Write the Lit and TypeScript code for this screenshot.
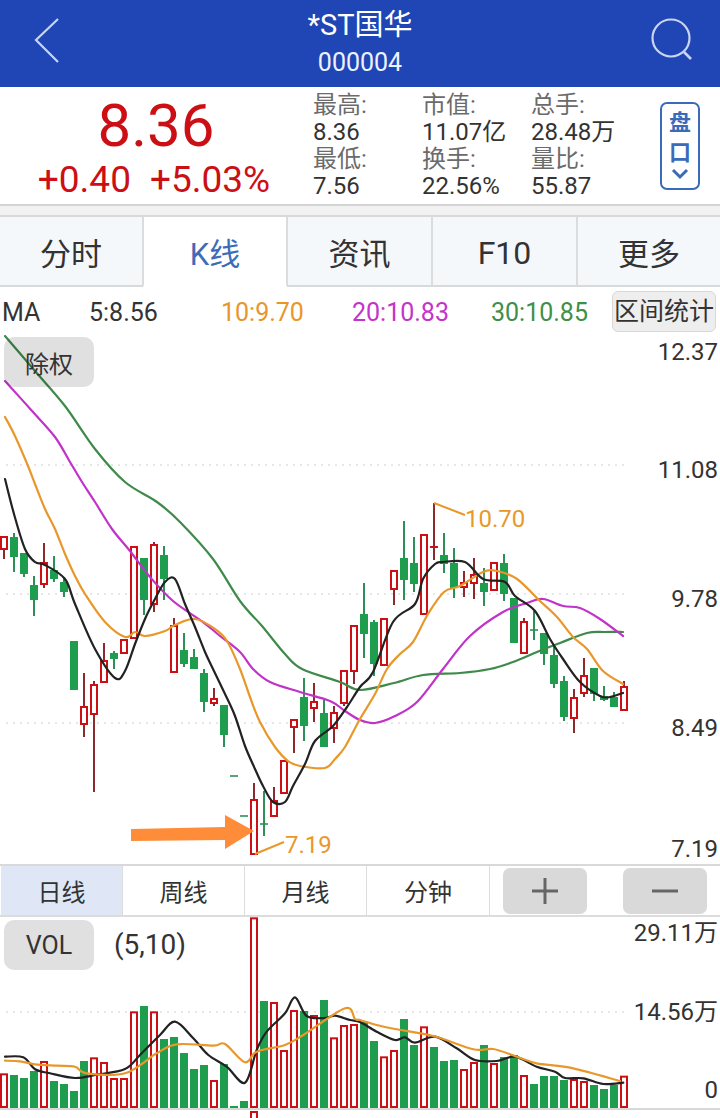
import { LitElement, html, css, svg } from "lit";
import { customElement } from "lit/decorators.js";

type C = [string, number, number, number, number];
const candles: C[] = [
  ["r",538,538,550,560],["g",534,538,558,573],["g",554,554,575,578],["g",577,586,601,617],["r",544,564,585,589],
  ["g",557,571,580,583],["g",578,583,593,598],["g",642,642,691,691],["r",674,708,725,738],["r",682,686,715,793],
  ["r",644,662,683,683],["g",652,654,660,670],["r",641,641,654,654],["r",548,548,639,639],["g",559,559,601,616],
  ["r",543,546,605,613],["g",547,556,580,601],["r",619,627,673,673],["g",634,651,665,668],["g",650,658,670,670],
  ["g",670,674,703,713],["r",689,700,704,707],["g",706,706,736,748],["g",777,777,777,777],["g",817,817,817,817],
  ["r",784,801,855,855],["g",792,825,825,837],["r",788,802,817,817],["r",762,762,794,794],["r",721,721,728,754],
  ["g",679,698,727,742],["r",684,703,709,723],["g",701,714,748,748],["r",707,714,729,744],["r",672,672,704,707],
  ["r",627,627,672,685],["g",584,615,635,659],["g",621,623,665,677],["r",620,620,666,666],["r",572,572,590,606],
  ["g",522,559,581,601],["g",538,564,585,593],["r",536,536,615,615],["r",504,547,549,561],["g",534,556,565,574],
  ["g",549,564,589,599],["r",572,584,588,598],["r",559,576,584,600],["g",569,584,593,607],["r",564,564,591,591],
  ["g",555,564,595,602],["g",599,599,644,644],["r",619,623,654,654],["g",612,631,631,641],["g",634,634,655,666],
  ["g",647,656,685,689],["g",677,682,718,722],["r",690,699,719,734],["r",659,677,694,698],["g",669,669,695,702],
  ["g",687,697,701,702],["g",693,698,708,708],["r",682,688,711,711],
];

const ma5 = "5,480 14,515 25,550 35,563 45,566 65,580 75,605 95,650 115,679 125,672 135,645 145,620 155,600 165,583 175,580 185,605 195,628 205,653 213,670 225,695 235,717 245,747 255,770 263,787 273,803 285,803 293,787 305,765 315,742 333,727 347,708 360,688 373,673 393,623 415,605 423,580 435,565 443,563 465,563 483,580 505,583 515,597 535,612 550,640 563,660 580,683 600,697 610,698 623,694";
const ma10 = "5,418 15,437 28,467 35,485 45,510 55,530 65,555 75,577 85,595 105,623 125,638 135,633 145,637 165,632 175,626 195,620 215,630 227,642 240,670 250,698 260,723 275,748 288,762 300,767 325,769 335,760 345,748 360,720 375,695 387,670 400,655 413,643 428,615 444,593 460,587 483,573 497,572 517,580 540,602 557,618 573,638 587,650 603,672 623,685";
const ma20 = "5,382 33,413 55,438 70,463 82,483 95,503 112,530 130,552 150,578 173,602 203,623 220,637 240,653 253,670 270,683 300,693 330,702 345,712 360,721 375,724 395,717 417,703 443,670 470,637 503,613 527,604 543,600 563,607 580,609 600,620 623,637";
const ma30 = "5,337 35,372 65,407 95,450 125,483 157,503 180,523 213,560 240,602 262,627 285,655 302,670 340,683 360,691 394,684 423,676 460,674 490,670 513,663 537,653 560,644 587,634 605,633 623,633";

const volTops = [643,645,654,633,606,663,672,693,603,595,609,657,657,457,438,457,537,531,579,627,615,663,612,738,723,175,423,429,573,453,453,468,420,535,498,495,
  485,543,592,573,477,555,502,561,603,600,630,609,555,612,591,585,648,672,648,648,660,660,666,675,687,675,650];
const volRed = new Set([0,4,9,10,11,12,13,15,21,25,27,28,29,31,33,34,35,38,39,42,46,47,49,52,57,58,62]);

const conv = (pts: number[][], ox: number) =>
  pts.map(([x, y]) => `${(ox + x / 3).toFixed(1)},${(860 + y / 3).toFixed(1)}`).join(" ");
const vma5 = conv([[15,590],[70,592],[105,628],[150,640],[225,654],[290,644],[375,627],[420,585],[480,525],[525,485],[580,535],[625,585],[680,620],[735,668],[770,570],[800,515],[855,460],[885,412],[920,468],[975,474],[1005,467],[1050,480],[1080,486]],0)
  + " " + conv([[50,515],[105,540],[135,532],[165,548],[225,530],[290,565],[345,600],[410,603],[465,590],[530,620],[585,635],[615,654],[670,655],[730,672],[790,668]],360);
const vma10 = conv([[15,602],[60,604],[105,613],[170,617],[225,620],[260,640],[375,640],[470,580],[530,553],[640,557],[675,552],[735,607],[770,575],[855,555],[910,525],[1035,445],[1065,477],[1080,480]],0)
  + " " + conv([[50,495],[105,507],[220,528],[340,568],[400,567],[470,590],[530,610],[640,625],[780,663]],360);

const smooth = (s: string) => {
  const p = s.split(" ").map((q) => q.split(",").map(Number));
  let d = `M${p[0][0]} ${p[0][1]}`;
  for (let i = 0; i < p.length - 1; i++) {
    const a = p[Math.max(0, i - 1)], b = p[i], c = p[i + 1], e = p[Math.min(p.length - 1, i + 2)];
    const c1x = b[0] + (c[0] - a[0]) / 6, c1y = b[1] + (c[1] - a[1]) / 6;
    const c2x = c[0] - (e[0] - b[0]) / 6, c2y = c[1] - (e[1] - b[1]) / 6;
    d += `C${c1x.toFixed(1)} ${c1y.toFixed(1)} ${c2x.toFixed(1)} ${c2y.toFixed(1)} ${c[0]} ${c[1]}`;
  }
  return d;
};

const RED = "#cc0f14", WICK = "#8c2b2e", GREEN = "#1f9d4f", GWICK = "#2f8f58";

@customElement("app-root")
export class AppRoot extends LitElement {
  static styles = css`
    :host { display: block; width: 720px; height: 1118px; overflow: hidden; background: #fff; color: #333;
      font-family: Roboto, "Noto Sans CJK SC", sans-serif; }
    .header { height: 87px; background: #1f46b4; position: relative; display: flex; flex-direction: column; align-items: center; color: #fff; }
    .title { font-size: 29px; line-height: 32px; margin-top: 9px; }
    .code { font-size: 25px; line-height: 28px; margin-top: 8px; color: #eef2ff; }
    .hicon { position: absolute; top: 0; left: 0; }
    .quote { height: 117px; display: flex; background: #fff; border-bottom: 2px solid #d4d4d4; box-sizing: content-box; }
    .price { width: 313px; display: flex; flex-direction: column; align-items: center; color: #cc0f14; }
    .last { font-size: 60px; line-height: 66px; margin-top: 6px; margin-right: 1px; }
    .chg { font-size: 37px; line-height: 40px; margin-top: 1px; display: flex; gap: 19px; margin-right: 5px; }
    .stats { display: grid; grid-template-columns: 109px 109px 109px; grid-auto-rows: 27px; padding-top: 5px; font-size: 24px; line-height: 27px; }
    .l { color: #6b6b6b; }
    .v { color: #333; }
    .pan { width: 36px; height: 80px; margin: 15px 0 0 20px; border: 2px solid #3a6bb8; border-radius: 7px; color: #3a6bb8;
      display: flex; flex-direction: column; align-items: center; font-size: 22px; font-weight: 700; line-height: 30px; padding-top: 4px; }
    .gap { height: 9px; background: #f2f2f2; border-bottom: 2px solid #d9d9d9; }
    .tabs { display: grid; grid-template-columns: 143px 144px 145px 145px 143px; height: 70px; }
    .tab { box-sizing: border-box; display: flex; align-items: center; justify-content: center; font-size: 31px; color: #333; background: #f5f8fb;
      border-right: 1px solid #dcdcdc; border-left: 1px solid #dcdcdc; border-bottom: 2px solid #d9d9d9; }
    .tab:first-child { border-left: 0; }
    .tab:last-child { border-right: 0; }
    .tab.on { background: #fff; color: #3c6cb8; border-bottom-color: #fff; }
    .tab.latin { padding-top: 4px; font-size: 32px; }
    .maRow { height: 48px; position: relative; font-size: 25px; line-height: 52px; display: grid; grid-template-columns: 87px 132px 131px 139px 1fr; padding-left: 2px; box-sizing: border-box; }
    .range { position: absolute; right: 4px; top: 4px; width: 104px; height: 41px; box-sizing: border-box; background: #eee; border: 1px solid #d8d8d8; border-radius: 6px;
      font-size: 25px; line-height: 40px; text-align: center; white-space: nowrap; }
    .chart { position: relative; height: 529px; }
    .chart svg { display: block; }
    .pill { position: absolute; left: 4px; width: 90px; height: 50px; background: rgba(0, 0, 0, 0.12); border-radius: 10px; display: flex; align-items: center; justify-content: center; font-size: 24px; color: #333; }
    .pill.fq { top: 2px; }
    .pill.vol { top: 3px; font-size: 25px; padding-top: 1px; box-sizing: border-box; }
    .periods { height: 53px; box-sizing: border-box; border-top: 2px solid #d9d9d9; border-bottom: 2px solid #dcdcdc; display: flex; font-size: 24px; }
    .p { width: 122px; box-sizing: border-box; display: flex; align-items: center; justify-content: center; border-right: 1px solid #dcdcdc; }
    .p.on { background: #dfe7f6; margin-left: 1px; }
    .p.wide { width: 123px; }
    .step { width: 84px; height: 46px; margin-top: 2px; background: #d9d9d9; border-radius: 7px; display: flex; align-items: center; justify-content: center; }
    .step.a { margin-left: 13px; }
    .step.b { margin-left: 36px; }
    .volbox { position: relative; height: 191px; }
    .volbox svg { display: block; }
    .params { position: absolute; left: 114px; top: 12px; font-size: 28px; line-height: 32px; }
    .sep { height: 2px; background: #d9d9d9; }
    .foot { position: relative; height: 8px; overflow: hidden; }
    .footred { position: absolute; left: 250px; top: 1px; width: 8px; height: 8px; box-sizing: border-box; border: 2px solid #cc0f14; border-bottom: 0; }
    .foottext { position: absolute; right: 2px; top: 4px; font-size: 24px; line-height: 28px; }
    text { font-family: Roboto, "Noto Sans CJK SC", sans-serif; }
  `;

  private candle(c: C, i: number) {
    const x = 4 + i * 10;
    const [k, hi, top, bot, lo] = c;
    const red = k === "r";
    const wick = red ? WICK : GWICK;
    const w = svg`<line x1=${x} x2=${x} y1=${hi} y2=${lo} stroke=${wick} stroke-width="2"></line>`;
    if (top === bot) return svg`${w}<line x1=${x - 4} x2=${x + 4} y1=${top} y2=${top} stroke=${GWICK} stroke-width="1.6"></line>`;
    if (bot - top < 4) return svg`${w}<rect x=${x - 4} y=${top} width="8" height=${bot - top} fill=${RED}></rect>`;
    return red
      ? svg`${w}<rect x=${x - 3} y=${top} width="6" height=${bot - top} fill="#fff" stroke=${RED} stroke-width="2"></rect>`
      : svg`${w}<rect x=${x - 4} y=${top} width="8" height=${bot - top} fill=${GREEN}></rect>`;
  }

  private dots(y: number) {
    return svg`<line x1="6" x2="628" y1=${y} y2=${y} stroke="#cfcfcf" stroke-width="1" stroke-dasharray="2 5"></line>`;
  }

  private line(points: string, color: string) {
    return svg`<path d=${smooth(points)} fill="none" stroke=${color} stroke-width="2.2" stroke-linejoin="round" stroke-linecap="round"></path>`;
  }

  private label(y: number, t: string) {
    return svg`<text x="718" y=${y} text-anchor="end" font-size="24" fill="#333">${t}</text>`;
  }

  render() {
    return html`
      <div class="header">
        <svg class="hicon" width="720" height="87" fill="none" stroke="#c9d5f2" stroke-width="2.2">
          <path d="M58 19 36 40 58 62"></path>
          <circle cx="671" cy="38" r="18.5"></circle>
          <path d="M684 52 691 59" stroke-width="2.6"></path>
        </svg>
        <div class="title">*ST国华</div>
        <div class="code">000004</div>
      </div>
      <div class="quote">
        <div class="price">
          <div class="last">8.36</div>
          <div class="chg"><span>+0.40</span><span>+5.03%</span></div>
        </div>
        <div class="stats">
          <div class="l">最高:</div><div class="l">市值:</div><div class="l">总手:</div>
          <div class="v">8.36</div><div class="v">11.07亿</div><div class="v">28.48万</div>
          <div class="l">最低:</div><div class="l">换手:</div><div class="l">量比:</div>
          <div class="v">7.56</div><div class="v">22.56%</div><div class="v">55.87</div>
        </div>
        <div class="pan">
          <span>盘</span><span>口</span>
          <svg width="20" height="12" fill="none" stroke="#3a6bb8" stroke-width="3"><path d="M3 2 10 9 17 2"></path></svg>
        </div>
      </div>
      <div class="gap"></div>
      <div class="tabs">
        <div class="tab">分时</div>
        <div class="tab on">K线</div>
        <div class="tab">资讯</div>
        <div class="tab latin">F10</div>
        <div class="tab">更多</div>
      </div>
      <div class="maRow">
        <span>MA</span>
        <span>5:8.56</span>
        <span style="color:#e8962a">10:9.70</span>
        <span style="color:#c433cc">20:10.83</span>
        <span style="color:#3f8f47">30:10.85</span>
        <div class="range">区间统计</div>
      </div>
      <div class="chart">
        <svg width="720" height="529" viewBox="0 336 720 529">
          ${[466, 595, 724].map((y) => this.dots(y))}
          ${candles.map((c, i) => this.candle(c, i))}
          ${this.line(ma30, "#3f8a4a")}
          ${this.line(ma20, "#c032c8")}
          ${this.line(ma10, "#e8982b")}
          ${this.line(ma5, "#222")}
          ${this.label(361, "12.37")}
          ${this.label(479, "11.08")}
          ${this.label(608, "9.78")}
          ${this.label(737, "8.49")}
          ${this.label(858, "7.19")}
          <path d="M434 504 465 516" stroke="#e8982b" stroke-width="2"></path>
          <text x="465" y="528" font-size="24" fill="#e8982b">10.70</text>
          <path d="M255 855 284 843" stroke="#e8982b" stroke-width="2"></path>
          <text x="285" y="854" font-size="24" fill="#e8982b">7.19</text>
          <path d="M131 830 225 828 225 816 254 832 225 850 225 841 131 842Z" fill="#ff8c38"></path>
        </svg>
        <div class="pill fq">除权</div>
      </div>
      <div class="periods">
        <div class="p on">日线</div>
        <div class="p">周线</div>
        <div class="p">月线</div>
        <div class="p wide">分钟</div>
        <div class="step a">
          <svg width="28" height="28" fill="none" stroke="#666" stroke-width="3"><path d="M1 14H27M14 1V27"></path></svg>
        </div>
        <div class="step b">
          <svg width="28" height="28" fill="none" stroke="#666" stroke-width="3"><path d="M1 14H27"></path></svg>
        </div>
      </div>
      <div class="volbox">
        <svg width="720" height="191" viewBox="0 917 720 191">
          ${this.dots(1012)}
          ${volTops.map((t, i) => {
            const x = 4 + i * 10;
            const y = 860 + t / 3;
            return volRed.has(i)
              ? svg`<rect x=${x - 3} y=${y} width="6" height=${1107 - y} fill="#fff" stroke=${RED} stroke-width="2"></rect>`
              : svg`<rect x=${x - 4} y=${y} width="8" height=${1107 - y + 1} fill=${GREEN}></rect>`;
          })}
          ${this.line(vma5, "#222")}
          ${this.line(vma10, "#e8982b")}
          ${this.label(941, "29.11万")}
          ${this.label(1020, "14.56万")}
          ${this.label(1098, "0")}
        </svg>
        <div class="pill vol">VOL</div>
        <div class="params">(5,10)</div>
      </div>
      <div class="sep"></div>
      <div class="foot">
        <div class="footred"></div>
        <div class="foottext">1.000</div>
      </div>
    `;
  }
}
